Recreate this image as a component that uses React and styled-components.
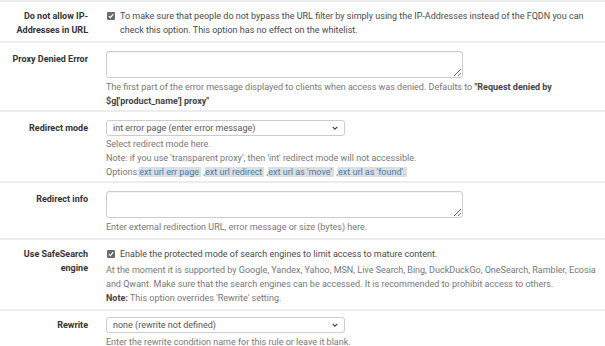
import styled, { createGlobalStyle } from 'styled-components'

const Global = createGlobalStyle`
   html, body {
      margin: 0;
      padding: 0;
      background: #fff;
   }
   body {
      font-family: Roboto, 'Liberation Sans', sans-serif;
      font-size: 9px;
      line-height: 14px;
      color: #333;
   }
`

const Form = styled.div`
   width: 605px;
   border-top: 2px solid #ececec;
`

const Row = styled.div`
   display: grid;
   grid-template-columns: 88px 1fr;
   column-gap: 18px;
   padding: ${(p) => p.$pad || '8px 0 4px'};
   border-bottom: 2px solid #ececec;
   &:last-child {
      border-bottom: none;
   }
`

const Label = styled.div`
   text-align: right;
   font-weight: 700;
   color: #333;
   padding-top: ${(p) => p.$top || 0}px;
`

const Field = styled.div`
   min-width: 0;
   padding-right: 3px;
`

const CheckLine = styled.label`
   display: flex;
   align-items: flex-start;
   gap: 5px;
   color: #4a4a4a;
`

const Box = styled.span`
   flex: none;
   width: 8px;
   height: 8px;
   margin: 3px 0 0 1px;
   border-radius: 1px;
   background: #6b6b6b;
   display: flex;
   align-items: center;
   justify-content: center;
`

const TextArea = styled.textarea`
   display: block;
   box-sizing: border-box;
   width: 357px;
   height: 27px;
   border: 1px solid #ccc;
   border-radius: 3px;
   background: #fff;
   margin: 0;
   padding: 3px 6px;
   font: inherit;
   box-shadow: inset 0 1px 1px rgba(0, 0, 0, 0.05);
`

const SelectWrap = styled.div`
   position: relative;
   width: 239px;
   height: 16px;
   box-sizing: border-box;
   border: 1px solid #ccc;
   border-radius: 3px;
   background: #fff;
`

const Select = styled.select`
   appearance: none;
   width: 100%;
   height: 100%;
   border: none;
   background: transparent;
   margin: 0;
   padding: 0 0 0 6px;
   font: inherit;
   font-size: 9px;
   color: #555;
   outline: none;
`

const Chevron = styled.svg`
   position: absolute;
   right: 6px;
   top: 4px;
   pointer-events: none;
`

const Help = styled.div`
   color: #777;
   margin-top: ${(p) => p.$mt || 2}px;
   b {
      color: #444;
   }
`

const Opt = styled.span`
   background: #dedede;
   color: #3f7bb6;
   padding-right: 2px;
`

function Check() {
   return (
      <Box>
         <svg width="6" height="6" viewBox="0 0 6 6">
            <path d="M0.8 3.1 L2.4 4.6 L5.2 1.2" fill="none" stroke="#fff" strokeWidth="1.2" />
         </svg>
      </Box>
   )
}

function Dropdown({ value }) {
   return (
      <SelectWrap>
         <Select defaultValue={value}>
            <option>{value}</option>
         </Select>
         <Chevron width="6" height="6" viewBox="0 0 6 6">
            <path d="M0.7 1.8 L3 4.2 L5.3 1.8" fill="none" stroke="#444" strokeWidth="1.1" />
         </Chevron>
      </SelectWrap>
   )
}

export default function App() {
   return (
      <>
         <Global />
         <Form>
            <Row $pad="7px 0 4px">
               <Label>
                  Do not allow IP-
                  <br />
                  Addresses in URL
               </Label>
               <Field>
                  <CheckLine>
                     <Check />
                     <span>
                        To make sure that people do not bypass the URL filter by simply using the IP-Addresses instead of the FQDN you can check this option. This option has no effect on the whitelist.
                     </span>
                  </CheckLine>
               </Field>
            </Row>

            <Row $pad="8px 0 2px">
               <Label $top={1}>Proxy Denied Error</Label>
               <Field>
                  <TextArea />
                  <Help>
                     The first part of the error message displayed to clients when access was denied. Defaults to <b>"Request denied by $g['product_name'] proxy"</b>
                  </Help>
               </Field>
            </Row>

            <Row $pad="8px 0 2px">
               <Label $top={1}>Redirect mode</Label>
               <Field>
                  <Dropdown value="int error page (enter error message)" />
                  <Help $mt={1}>
                     Select redirect mode here.
                     <br />
                     Note: if you use 'transparent proxy', then 'int' redirect mode will not accessible.
                     <br />
                     Options:<Opt>ext url err page</Opt> ,<Opt>ext url redirect</Opt> ,<Opt>ext url as 'move'</Opt> ,<Opt>ext url as 'found'.</Opt>
                  </Help>
               </Field>
            </Row>

            <Row $pad="8px 0 4px">
               <Label $top={1}>Redirect info</Label>
               <Field>
                  <TextArea />
                  <Help>Enter external redirection URL, error message or size (bytes) here.</Help>
               </Field>
            </Row>

            <Row $pad="7px 0 4px">
               <Label>
                  Use SafeSearch
                  <br />
                  engine
               </Label>
               <Field>
                  <CheckLine>
                     <Check />
                     <span>Enable the protected mode of search engines to limit access to mature content.</span>
                  </CheckLine>
                  <Help>
                     At the moment it is supported by Google, Yandex, Yahoo, MSN, Live Search, Bing, DuckDuckGo, OneSearch, Rambler, Ecosia and Qwant. Make sure that the search engines can be accessed. It is recommended to prohibit access to others.
                     <br />
                     <b>Note:</b> This option overrides 'Rewrite' setting.
                  </Help>
               </Field>
            </Row>

            <Row $pad="6px 0 4px">
               <Label $top={1}>Rewrite</Label>
               <Field>
                  <Dropdown value="none (rewrite not defined)" />
                  <Help $mt={0}>Enter the rewrite condition name for this rule or leave it blank.</Help>
               </Field>
            </Row>
         </Form>
      </>
   )
}
